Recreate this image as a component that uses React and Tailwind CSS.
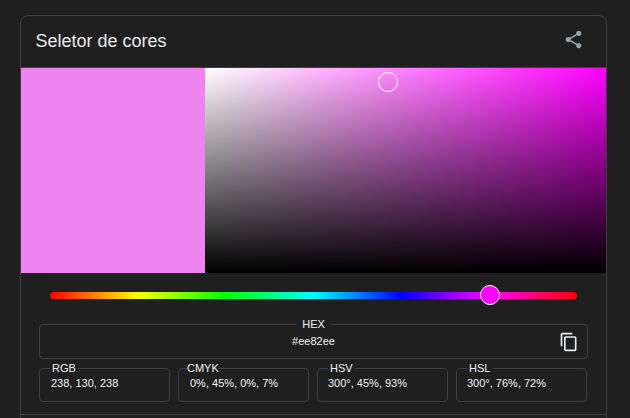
import { useState } from "react";

const formats = [
  { name: "RGB", value: "238, 130, 238", legend: "ml-[10px] px-[2px]", text: "pl-[11px]" },
  { name: "CMYK", value: "0%, 45%, 0%, 7%", legend: "ml-[8px]", text: "pl-[11px]" },
  { name: "HSV", value: "300°, 45%, 93%", legend: "ml-[10px] px-[2px]", text: "pl-[10px]" },
  { name: "HSL", value: "300°, 76%, 72%", legend: "ml-[10px] px-[2px]", text: "pl-[10px]" },
];

function ShareIcon() {
  return (
    <svg viewBox="0 0 24 24" className="w-[21px] h-[21px] mb-[4px] fill-[#9aa0a6]">
      <path d="M18 16.08c-.76 0-1.44.3-1.96.77L8.91 12.7c.05-.23.09-.46.09-.7s-.04-.47-.09-.7l7.05-4.11c.54.5 1.25.81 2.04.81 1.66 0 3-1.34 3-3s-1.34-3-3-3-3 1.34-3 3c0 .24.04.47.09.7L8.04 9.81C7.5 9.31 6.79 9 6 9c-1.66 0-3 1.34-3 3s1.34 3 3 3c.79 0 1.5-.31 2.04-.81l7.12 4.16c-.05.21-.08.43-.08.65 0 1.61 1.31 2.92 2.92 2.92s2.92-1.31 2.92-2.92-1.31-2.92-2.92-2.92z" />
    </svg>
  );
}

function CopyIcon() {
  return (
    <svg viewBox="0 0 24 24" className="w-[20px] h-[20px] fill-[#e8eaed]">
      <path d="M16 1H4c-1.1 0-2 .9-2 2v14h2V3h12V1zm3 4H8c-1.1 0-2 .9-2 2v14c0 1.1.9 2 2 2h11c1.1 0 2-.9 2-2V7c0-1.1-.9-2-2-2zm0 16H8V7h11v14z" />
    </svg>
  );
}

export default function App() {
  const [hex] = useState("#ee82ee");

  return (
    <div className="h-[418px] overflow-hidden bg-[#1f1f1f] pt-[15px] pl-[20px] font-['Liberation_Sans',Arial,sans-serif]">
      <div className="w-[587px] h-[440px] rounded-t-[8px] border border-[#3c4043]">
        {/* header */}
        <div className="h-[52px] flex items-center justify-between pl-[14.5px] pr-[22px] border-b border-[#3c4043]">
          <span className="text-[18px] text-[#e8eaed]">Seletor de cores</span>
          <ShareIcon />
        </div>

        {/* colour area */}
        <div className="flex h-[205px]">
          <div className="w-[184px] bg-[#ee82ee]" />
          <div className="relative flex-1 bg-[linear-gradient(to_top,#000,transparent),linear-gradient(to_right,#fff,#ff00ff)]">
            <div className="absolute left-[173px] top-[4px] w-[20px] h-[20px] rounded-full border border-white" />
          </div>
        </div>

        {/* hue slider */}
        <div className="relative mt-[19px] ml-[29px] w-[527px] h-[7px] rounded-full bg-[linear-gradient(to_right,#f00,#ff0,#0f0,#0ff,#00f,#f0f,#f00)]">
          <div className="absolute left-[430px] top-[-7px] w-[20px] h-[20px] rounded-full border border-white bg-[#ff00ff]" />
        </div>

        {/* hex */}
        <fieldset className="relative mt-[18px] ml-[18px] w-[549px] h-[42px] rounded-[4px] border border-[#3c4043] text-center">
          <legend className="mx-auto px-[6px] text-[11px] leading-[14px] text-[#f1f3f4]">HEX</legend>
          <div className="text-[11px] leading-[14px] mt-[3px] text-[#f1f3f4]">{hex}</div>
          <div className="absolute right-[8px] top-[1px]">
            <CopyIcon />
          </div>
        </fieldset>

        {/* other formats */}
        <div className="flex gap-[8px] mt-[2px] ml-[18px]">
          {formats.map((f) => (
            <fieldset key={f.name} className="w-[131px] h-[41px] rounded-[4px] border border-[#3c4043]">
              <legend className={`${f.legend} text-[11px] leading-[14px] text-[#f1f3f4]`}>{f.name}</legend>
              <div className={`${f.text} mt-[1px] text-[11px] leading-[14px] text-[#f1f3f4] whitespace-nowrap`}>
                {f.value}
              </div>
            </fieldset>
          ))}
        </div>

        <div className="mt-[12px] border-t border-[#3c4043]" />
      </div>
    </div>
  );
}
